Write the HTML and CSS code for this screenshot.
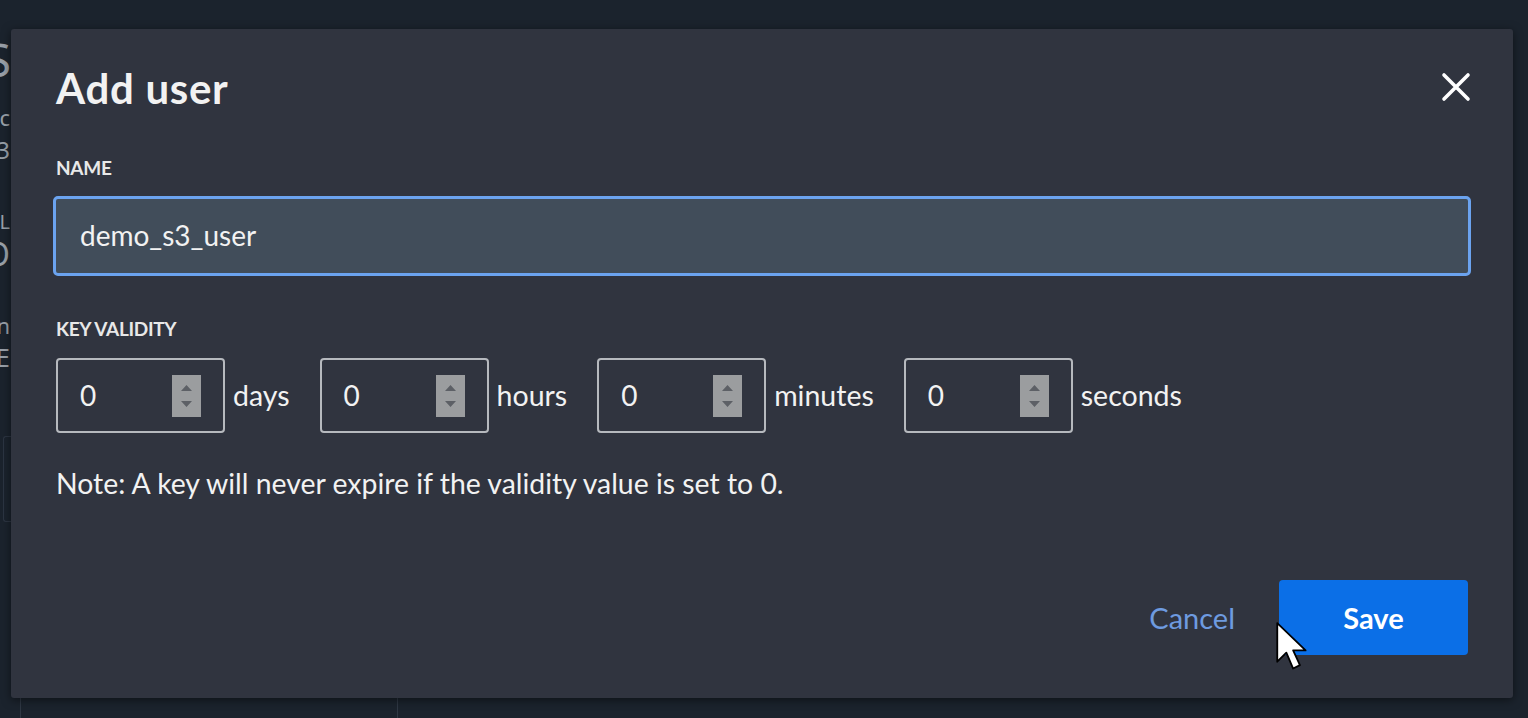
FILE: index.html
```html
<!DOCTYPE html>
<html>
<head>
<meta charset="utf-8">
<link rel="stylesheet" href="styles.css">
</head>
<body>
<div class="page">
  <div class="bg-side">
    <div class="bg-l bg-s">S</div>
    <div class="bg-l bg-c">c</div>
    <div class="bg-l bg-3">3</div>
    <div class="bg-l bg-L">L</div>
    <div class="bg-l bg-O">O</div>
    <div class="bg-l bg-n">n</div>
    <div class="bg-l bg-E">E</div>
    <div class="bg-card"></div>
  </div>
  <div class="bg-bottom">
    <div class="bg-col c1"></div>
    <div class="bg-col c2"></div>
  </div>
</div>

<div class="modal">
  <div class="modal-head">
    <h1 class="title">Add user</h1>
    <button class="close" aria-label="Close">
      <svg width="30" height="30" viewBox="0 0 30 30"><path d="M3 3 L27 27 M27 3 L3 27" stroke="#ffffff" stroke-width="3.6" stroke-linecap="round"/></svg>
    </button>
  </div>

  <label class="label">NAME</label>
  <div class="name-input">demo_s3_user</div>

  <label class="label kv">KEY VALIDITY</label>
  <div class="validity">
    <div class="spin"><span class="val">0</span><span class="arrows"><svg width="29" height="42" viewBox="0 0 29 42"><path d="M9 16 L14.5 10 L20 16 Z M9 26 L14.5 32 L20 26 Z" fill="#5d6066"/></svg></span></div>
    <span class="unit">days</span>
    <div class="spin"><span class="val">0</span><span class="arrows"><svg width="29" height="42" viewBox="0 0 29 42"><path d="M9 16 L14.5 10 L20 16 Z M9 26 L14.5 32 L20 26 Z" fill="#5d6066"/></svg></span></div>
    <span class="unit">hours</span>
    <div class="spin"><span class="val">0</span><span class="arrows"><svg width="29" height="42" viewBox="0 0 29 42"><path d="M9 16 L14.5 10 L20 16 Z M9 26 L14.5 32 L20 26 Z" fill="#5d6066"/></svg></span></div>
    <span class="unit">minutes</span>
    <div class="spin"><span class="val">0</span><span class="arrows"><svg width="29" height="42" viewBox="0 0 29 42"><path d="M9 16 L14.5 10 L20 16 Z M9 26 L14.5 32 L20 26 Z" fill="#5d6066"/></svg></span></div>
    <span class="unit">seconds</span>
  </div>

  <p class="note">Note: A key will never expire if the validity value is set to 0.</p>

  <div class="actions">
    <button class="cancel">Cancel</button>
    <button class="save">Save</button>
  </div>
</div>

<svg class="cursor" width="34" height="54" viewBox="0 0 30 46"><path d="M2 2 L2 36 L10 28 L16 42 L22 39 L16 26 L27 26 Z" fill="#ffffff" stroke="#000000" stroke-width="1.6" stroke-linejoin="round"/></svg>
</body>
</html>
```

FILE: styles.css
```css
* { box-sizing: border-box; }
html, body {
  margin: 0;
  padding: 0;
  width: 1528px;
  height: 718px;
  overflow: hidden;
  background: #1b232d;
  font-family: Lato, "Noto Sans", sans-serif;
  color: #f2f2f2;
}
.page {
  position: relative;
  width: 1528px;
  height: 718px;
}
.bg-side {
  display: flex;
  flex-direction: column;
  align-items: flex-end;
  width: 11px;
  overflow: hidden;
  color: #99a0a8;
  font-family: "Noto Sans", sans-serif;
  padding-top: 36px;
}
.bg-l { line-height: 1; margin-right: 1px; overflow: hidden; }
.bg-s { font-size: 46px; margin-right: 0; }
.bg-c { font-size: 22px; margin-top: 24px; }
.bg-3 { font-size: 24px; margin-top: 10px; }
.bg-L { font-size: 20px; margin-top: 50px; }
.bg-O { font-size: 32px; margin-top: 6px; }
.bg-n { font-size: 22px; margin-top: 44px; }
.bg-E { font-size: 26px; margin-top: 8px; }
.bg-card {
  margin-top: 66px;
  width: 8px;
  height: 86px;
  border: 1px solid #2c3542;
  border-right: 0;
  border-radius: 3px 0 0 3px;
}
.bg-bottom {
  position: absolute;
  left: 0; top: 698px;
  width: 1528px; height: 20px;
  display: flex;
}
.bg-col { height: 20px; border-left: 1px solid #2f3844; }
.c1 { margin-left: 20px; width: 377px; }
.c2 { width: 600px; }

.modal {
  position: absolute;
  left: 11px;
  top: 29px;
  width: 1502px;
  height: 669px;
  background: #30343f;
  border-radius: 3px;
  box-shadow: 0 2px 10px rgba(0,0,0,0.5);
  padding: 0 45px;
  display: flex;
  flex-direction: column;
}
.modal-head {
  display: flex;
  align-items: center;
  justify-content: space-between;
  height: 120px;
  padding-bottom: 2px;
}
.title {
  margin: 0;
  font-size: 42px;
  font-weight: 700;
  letter-spacing: 0.7px;
}
.close {
  background: none;
  border: 0;
  padding: 0;
  margin-right: -3px;
  margin-top: -2px;
  width: 30px;
  height: 30px;
  display: flex;
}
.label {
  font-size: 19px;
  font-weight: 700;
  color: #e8e8e8;
  letter-spacing: -0.3px;
  line-height: 24px;
  margin-top: 7px;
}
.name-input {
  margin-top: 16px;
  margin-left: -3px;
  width: 1418px;
  height: 80px;
  border: 3px solid #6ba3ef;
  border-radius: 5px;
  background: #414d5a;
  font-size: 28px;
  display: flex;
  align-items: center;
  padding-left: 24px;
  padding-bottom: 2px;
}
.label.kv { margin-top: 41px; }
.validity {
  margin-top: 17px;
  display: flex;
  align-items: center;
  height: 75px;
}
.spin {
  width: 169px;
  height: 75px;
  border: 2px solid #b6b9be;
  border-radius: 4px;
  display: flex;
  align-items: center;
  justify-content: space-between;
  padding: 0 22px;
  font-size: 28px;
}
.spin .val { padding-bottom: 2px; }
.arrows {
  display: flex;
  width: 29px;
  height: 42px;
  background: #9b9d9f;
}
.unit {
  font-size: 28.5px;
  margin-left: 8px;
  margin-right: 30px;
  padding-bottom: 2px;
}
.note {
  margin: 32px 0 0 0;
  font-size: 28.4px;
  line-height: 36px;
}
.actions {
  margin-top: 79px;
  display: flex;
  justify-content: flex-end;
  align-items: center;
}
.cancel {
  background: none;
  border: 0;
  font-family: inherit;
  font-size: 29px;
  color: #6e9be0;
  padding: 0;
  margin-right: 44px;
}
.save {
  width: 189px;
  height: 75px;
  border: 0;
  border-radius: 4px;
  background: #0b6fe7;
  color: #ffffff;
  font-family: inherit;
  font-size: 29px;
  font-weight: 700;
}
.cursor {
  position: absolute;
  left: 1275px;
  top: 620px;
}
```
